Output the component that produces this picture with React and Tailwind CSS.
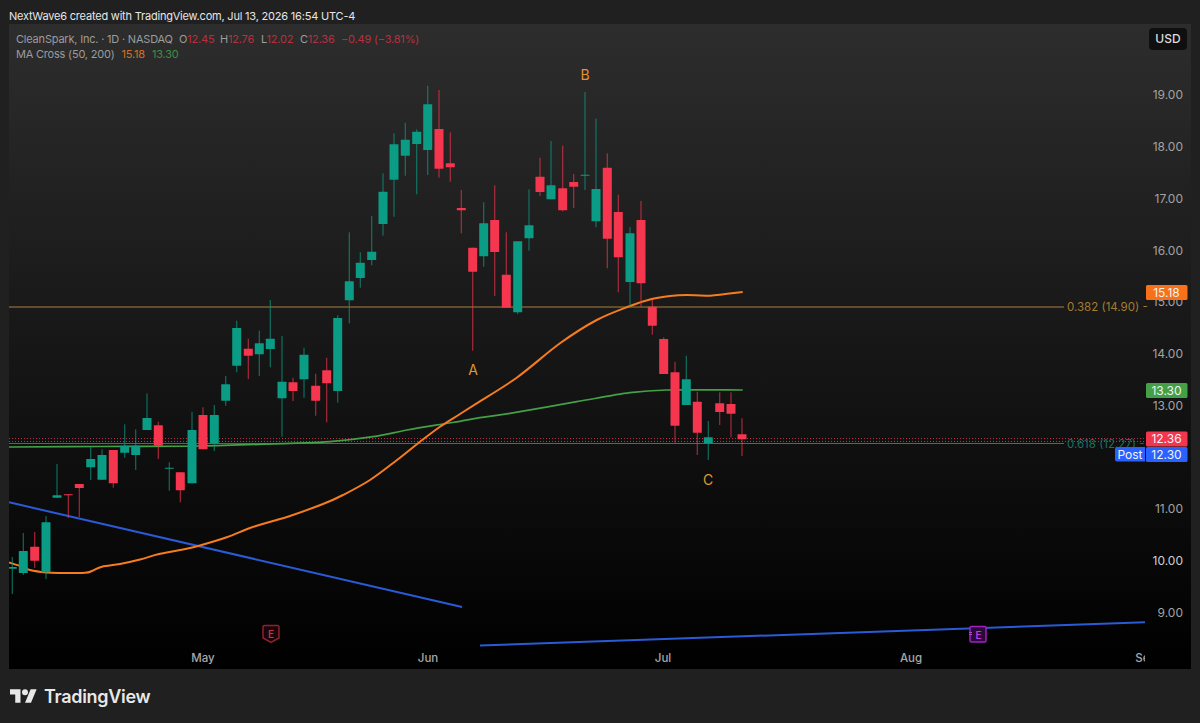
const UP = '#0a9c84'
const DOWN = '#f5364e'

// x, wick top, wick bottom, body top, body bottom, direction
const candles = [
  [12.3, 557, 594, 567, 568.7, 'u'],
  [23.3, 533, 575, 551, 573, 'u'],
  [34.7, 532, 568, 546.7, 560.7, 'd'],
  [46, 516, 579, 522.3, 572.3, 'u'],
  [57, 464, 498, 495.3, 497.7, 'u'],
  [68.3, 494.3, 518, 494.3, 495.3, 'd'],
  [79.3, 484, 517, 484, 488, 'd'],
  [90.7, 446.7, 480, 459, 467.3, 'u'],
  [102, 449.3, 480, 455, 479.7, 'u'],
  [113.3, 450, 487.7, 450, 483.3, 'd'],
  [124.7, 424.3, 457.7, 445.7, 452.7, 'u'],
  [135.7, 429.3, 470, 445.7, 455, 'u'],
  [147, 393.3, 430, 418, 430, 'u'],
  [158.3, 421.7, 459, 425.3, 445.7, 'd'],
  [169.3, 462.3, 490.7, 467.7, 468.7, 'u'],
  [180.3, 472.3, 502.3, 472.3, 490.3, 'd'],
  [192, 411.7, 483.3, 430, 483.3, 'u'],
  [203, 407.3, 449.3, 415, 449.3, 'd'],
  [214.3, 405, 451, 415, 443.7, 'u'],
  [225.7, 376, 405.7, 384.3, 400.7, 'u'],
  [236.7, 320.7, 372.3, 328, 365.7, 'u'],
  [248.3, 338.7, 379, 348.7, 355.7, 'd'],
  [259.3, 330.7, 376, 343.3, 354.3, 'u'],
  [270.3, 300, 367.3, 338.7, 349, 'u'],
  [282, 336, 436.7, 381.7, 398.3, 'u'],
  [293, 377.7, 401, 382.3, 391, 'd'],
  [304, 347.7, 397.7, 354.7, 379.3, 'u'],
  [315.7, 373.7, 415.7, 385.7, 400.7, 'd'],
  [326.7, 357.7, 422.3, 370.3, 383.3, 'd'],
  [337.7, 315.3, 402.7, 318, 391, 'u'],
  [349.3, 232.3, 323.3, 281.3, 300.3, 'u'],
  [360.3, 252.3, 287.7, 262.7, 278, 'u'],
  [371.7, 216, 265.3, 251.7, 260, 'u'],
  [383, 173.3, 235.7, 191.7, 224, 'u'],
  [394, 133.3, 216.7, 144.3, 179.7, 'u'],
  [405.3, 122.7, 175.7, 139.7, 155.7, 'u'],
  [416.7, 129.3, 194.3, 131.7, 144, 'u'],
  [427.7, 85.7, 175, 104.3, 150, 'u'],
  [439, 90, 177.7, 129, 168.7, 'd'],
  [450.3, 132.3, 181.7, 163.3, 167.3, 'd'],
  [461.3, 190, 233.3, 208, 210.3, 'd'],
  [472.7, 247.7, 350.7, 247.7, 271.7, 'd'],
  [483.7, 202.3, 266.7, 223.3, 256.3, 'u'],
  [494.7, 185.3, 296, 220, 252, 'd'],
  [506.3, 232.3, 307.7, 274.7, 307.7, 'd'],
  [517.7, 241.3, 314, 241.3, 312.3, 'u'],
  [529, 189.3, 250.7, 225.3, 238.3, 'u'],
  [540, 157.7, 196, 176.7, 192, 'd'],
  [551, 141, 199.3, 185.3, 199.3, 'u'],
  [562.7, 145.7, 211.3, 188.3, 210.3, 'd'],
  [573.7, 174, 208, 182, 186.7, 'd'],
  [585, 92, 190, 174.7, 175.4, 'u'],
  [596, 118.7, 227.3, 189, 221.3, 'u'],
  [607.3, 153.3, 268.3, 167.7, 238.7, 'd'],
  [618.3, 194.7, 292.3, 212, 257.3, 'd'],
  [630, 227.3, 306.7, 233.3, 282, 'u'],
  [641, 201, 306.7, 220, 283.3, 'd'],
  [652.3, 300, 334.7, 306.7, 325.7, 'd'],
  [663.7, 337.3, 374, 339, 374, 'd'],
  [675, 361.7, 442.7, 372.3, 425.7, 'd'],
  [686.3, 355.7, 405, 379.3, 405, 'u'],
  [697.3, 391.7, 455, 401.7, 432.7, 'd'],
  [708.3, 421, 460, 437.3, 443.3, 'u'],
  [719.7, 392.3, 425, 403.3, 412, 'd'],
  [731, 392.3, 437.3, 404, 413.7, 'd'],
  [742, 418.3, 456, 434.3, 439.3, 'd'],
]

const orangeMa = [
  [9, 562.5], [20, 566], [30, 570], [46, 572.5], [60, 573], [85, 572.7], [92, 571], [102, 566.7],
  [120, 564], [140, 559.5], [158, 554.3], [180, 550], [199, 545.7], [226.7, 537.3], [250, 528],
  [273, 521], [290, 516], [323, 504], [343, 495], [370, 480], [397, 460], [420, 441.7], [440, 426.7],
  [460, 414], [476.7, 403.3], [516.7, 377.7], [560, 343.3], [596.7, 320], [630, 306],
  [651.7, 299], [670, 296], [686.7, 295], [710, 295.7], [742.7, 292],
]
const greenMa = [
  [9, 447], [100, 446.5], [200, 446], [290, 443.3], [330, 441.7], [373, 436.7], [407, 430],
  [443, 424], [460, 421.3], [480, 417.7], [510, 413.3], [576.7, 401.7], [630, 392.7], [666.7, 390], [742.7, 390],
]

// catmull-rom through the points so the averages don't look kinked
function smooth(pts) {
  let d = `M${pts[0][0]} ${pts[0][1]}`
  for (let i = 0; i < pts.length - 1; i++) {
    const p0 = pts[i - 1] || pts[i]
    const p1 = pts[i]
    const p2 = pts[i + 1]
    const p3 = pts[i + 2] || p2
    const c1x = p1[0] + (p2[0] - p0[0]) / 6
    const c1y = p1[1] + (p2[1] - p0[1]) / 6
    const c2x = p2[0] - (p3[0] - p1[0]) / 6
    const c2y = p2[1] - (p3[1] - p1[1]) / 6
    d += `C${c1x} ${c1y} ${c2x} ${c2y} ${p2[0]} ${p2[1]}`
  }
  return d
}

const prices = [
  ['19.00', 95],
  ['18.00', 147],
  ['17.00', 199],
  ['16.00', 251],
  ['15.00', 302],
  ['14.00', 354],
  ['13.00', 406],
  ['11.00', 509],
  ['10.00', 561],
  ['9.00', 613],
]

const months = [
  ['May', 203],
  ['Jun', 428],
  ['Jul', 663],
  ['Aug', 911],
  ['Sep', 1146],
]

const tags = [
  ['15.18', 285, '#f7711a'],
  ['13.30', 383, '#43a047'],
  ['12.36', 431.5, '#f23650'],
  ['12.30', 447, '#2962ff'],
]

function Chart() {
  return (
    <svg viewBox="9 24 1182 645" className="absolute inset-0 w-full h-full" fill="none">
      <defs>
        <clipPath id="time-clip">
          <rect x="9" y="640" width="1136" height="30" />
        </clipPath>
      </defs>

      {prices.map(([label, y]) => (
        <text key={label} x="1183" y={y + 4} textAnchor="end" fontSize="12" fill={label === '10.00' ? '#cfcfcf' : '#a3a3a3'}>
          {label}
        </text>
      ))}
      <g clipPath="url(#time-clip)">
        {months.map(([label, x]) => (
          <text key={label} x={x} y="662" textAnchor="middle" fontSize="11.5" fontWeight="500" fill="#a8a8a8">
            {label}
          </text>
        ))}
      </g>

      <line x1="9" x2="1064" y1="307" y2="307" stroke="#a8813d" />
      <line x1="9" x2="1064" y1="443.5" y2="443.5" stroke="#1d7f78" />
      <line x1="9" x2="1146" y1="438.5" y2="438.5" stroke="#b8334a" strokeDasharray="1 2" />
      <line x1="9" x2="1146" y1="441.5" y2="441.5" stroke="#3b5fc4" strokeDasharray="1 2" />
      <text x="1067" y="311" fontSize="11.5" fill="#a67c2e">0.382 (14.90) -</text>
      <text x="1067" y="447.5" fontSize="11.5" fill="#1f6e66">0.618 (12.27) -</text>

      <line x1="9" y1="502.3" x2="462" y2="607" stroke="#2a5bd7" strokeWidth="2" />
      <line x1="480" y1="645.5" x2="1145" y2="622.3" stroke="#2a5bd7" strokeWidth="2" />
      <path d={smooth(greenMa)} stroke="#43a047" strokeWidth="1.7" />
      <path d={smooth(orangeMa)} stroke="#f57c1f" strokeWidth="2" />

      {candles.map(([x, wt, wb, bt, bb, dir], i) => (
        <g key={i} fill={dir === 'u' ? UP : DOWN}>
          <rect x={x - 0.6} y={wt} width="1.2" height={wb - wt} opacity="0.65" />
          <rect x={x - 4.5} y={bt} width="9" height={Math.max(bb - bt, 1)} rx="0.5" />
        </g>
      ))}

      <text x="473" y="375" textAnchor="middle" fontSize="14" fill="#df9a2c">A</text>
      <text x="585" y="80" textAnchor="middle" fontSize="14" fill="#e8902a">B</text>
      <text x="708" y="485" textAnchor="middle" fontSize="14" fill="#df9a2c">C</text>

      <path d="M263 627a1.5 1.5 0 0 1 1.5-1.5h13a1.5 1.5 0 0 1 1.5 1.5v11l-8 4.500-8-4.500z" fill="#1c0508" stroke="#8f2130" strokeWidth="1.500" />
      <text x="271" y="638" textAnchor="middle" fontSize="10" fontWeight="600" fill="#c2334a">E</text>

      <rect x="970" y="626.500" width="16" height="15.500" rx="1.500" fill="#2a0a36" stroke="#a21fc4" strokeWidth="1.500" />
      <path d="M969 632.500h3M969 634.500h3" stroke="#c23be0" />
      <text x="978.500" y="638.500" textAnchor="middle" fontSize="10" fontWeight="600" fill="#c23be0">E</text>

      {tags.map(([label, y, color]) => (
        <g key={label}>
          <rect x="1146" y={y} width="41.500" height="15" rx="1.500" fill={color} />
          <text x="1166.500" y={y + 11.500} textAnchor="middle" fontSize="12" fill="#f2f2f2">{label}</text>
        </g>
      ))}
      <path d="M1117 447h28v14.500h-28a2 2 0 0 1-2-2v-10.500a2 2 0 0 1 2-2z" fill="#2962ff" />
      <text x="1130" y="458.500" textAnchor="middle" fontSize="12" fill="#f2f2f2">Post</text>
    </svg>
  )
}

export default function App() {
  return (
    <div className="w-[1200px] h-[723px] flex flex-col bg-[#202020] font-[Inter,sans-serif] overflow-hidden">
      <div className="h-6 flex-none pl-[9px] pt-[8px] text-[11px] leading-4 tracking-[-0.2px] text-[#e6e6e6] whitespace-nowrap">
        NextWave6 created with TradingView.com, Jul 13, 2026 16:54 UTC-4
      </div>

      <div className="relative mx-[9px] h-[645px] flex-none bg-linear-to-b/srgb from-[#2d2d2d] to-black">
        <Chart />
        <div className="relative pl-[7px] pt-[8px] text-[11px] leading-[15px] tracking-[-0.2px] text-[#9c9c9c] whitespace-nowrap">
          <div className="flex">
            <span className="w-[163px]">CleanSpark, Inc. · 1D · NASDAQ</span>
            <span className="w-[41px]">O<span className="text-[#b8303f]">12.45</span></span>
            <span className="w-[41px]">H<span className="text-[#b8303f]">12.76</span></span>
            <span className="w-[39px]">L<span className="text-[#b8303f]">12.02</span></span>
            <span className="w-[41px]">C<span className="text-[#b8303f]">12.36</span></span>
            <span className="text-[#b8303f]">−0.49 (−3.81%)</span>
          </div>
          <div className="flex gap-[7px]">
            <span>MA Cross (50, 200)</span>
            <span className="text-[#d9701e]">15.18</span>
            <span className="text-[#3f8f45]">13.30</span>
          </div>
        </div>
        <div className="absolute left-[1140px] top-1 w-[38px] h-[22px] flex items-center justify-center rounded bg-[#0f0f0f] text-xs font-medium text-[#dcdcdc]">
          USD
        </div>
      </div>

      <div className="flex-1 flex items-start gap-[7px] pl-[10px] pt-[15px]">
        <svg viewBox="0 4 36 18" className="w-[27px] h-[14px] mt-[5px]" fill="#e8e8e8">
          <path d="M14 22H7V11H0V4h14v18zM28 22h-8l7.500-18h8L28 22z" />
          <circle cx="20" cy="8" r="4" />
        </svg>
        <span className="text-[18px] leading-6 mt-[1px] font-semibold tracking-[-0.3px] text-[#e8e8e8]">TradingView</span>
      </div>
    </div>
  )
}
